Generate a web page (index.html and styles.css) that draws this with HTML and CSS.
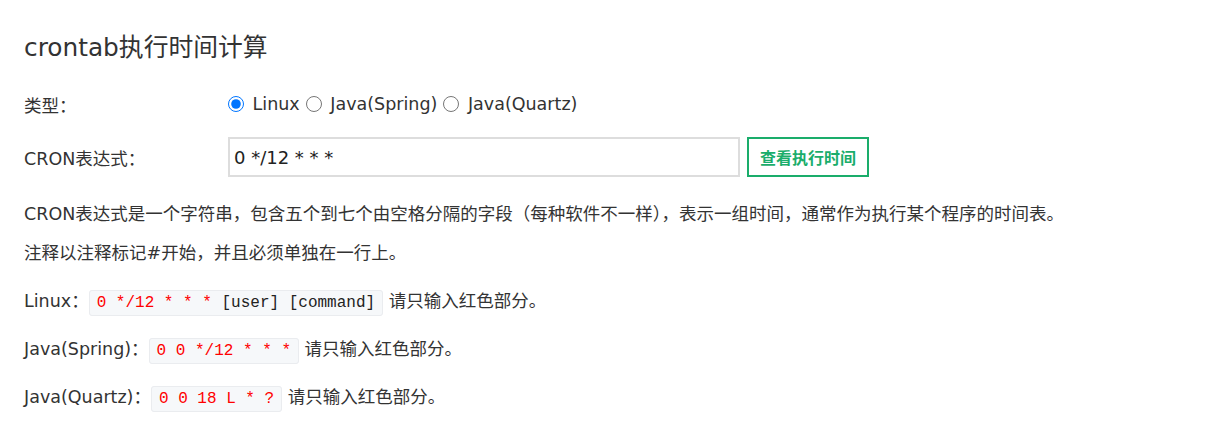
FILE: index.html
```html
<!DOCTYPE html>
<html lang="zh-CN">
<head>
    <meta charset="UTF-8">
    <meta name="viewport" content="width=device-width, initial-scale=1.0">
    <title>crontab执行时间计算</title>
    <link rel="stylesheet" href="styles.css">
</head>
<body>
    <div class="page">
        <h1>crontab执行时间计算</h1>

        <div class="form-row">
            <label class="form-label">类型：</label>
            <div class="radios">
                <label class="radio"><input type="radio" name="type" checked> Linux</label>
                <label class="radio"><input type="radio" name="type"> Java(Spring)</label>
                <label class="radio"><input type="radio" name="type"> Java(Quartz)</label>
            </div>
        </div>

        <div class="form-row">
            <label class="form-label">CRON表达式：</label>
            <input class="cron-input" type="text" value="0 */12 * * *">
            <button class="btn-run">查看执行时间</button>
        </div>

        <div class="notes">
            <p class="desc">CRON表达式是一个字符串，包含五个到七个由空格分隔的字段（每种软件不一样），表示一组时间，通常作为执行某个程序的时间表。</p>
            <p class="desc">注释以注释标记#开始，并且必须单独在一行上。</p>

            <p class="example first">Linux：<code><span class="red">0 */12 * * *</span> [user] [command]</code> 请只输入红色部分。</p>
            <p class="example">Java(Spring)：<code><span class="red">0 0 */12 * * *</span></code> 请只输入红色部分。</p>
            <p class="example">Java(Quartz)：<code><span class="red">0 0 18 L * ?</span></code> 请只输入红色部分。</p>
        </div>
    </div>
</body>
</html>
```

FILE: styles.css
```css
body {
    margin: 0;
    font-family: "DejaVu Sans", "Noto Sans CJK SC", sans-serif;
    font-size: 17.5px;
    color: #333;
    background: #fff;
}
.page {
    padding: 28px 24px 0;
}
h1 {
    font-size: 24.8px;
    font-weight: normal;
    margin: 0 0 16px;
    line-height: 40px;
}
.form-row {
    display: flex;
    align-items: center;
    margin-bottom: 13px;
}
.form-label {
    width: 204px;
    flex-shrink: 0;
}
.radios {
    display: flex;
    gap: 6px;
    height: 40px;
    align-items: center;
}
.radio input {
    margin: 0 3px 0 0;
    width: 16px;
    height: 16px;
    vertical-align: -2px;
}
.cron-input {
    width: 512px;
    height: 40px;
    box-sizing: border-box;
    border: 2px solid #ddd;
    padding: 0 4px;
    font-family: "DejaVu Sans", sans-serif;
    font-size: 18px;
    color: #222;
    outline: none;
}
.btn-run {
    margin-left: 7px;
    height: 40px;
    padding: 0 11px;
    border: 2px solid #1aad6b;
    background: #fff;
    color: #1aad6b;
    font-family: "Noto Sans CJK SC", sans-serif;
    font-size: 16px;
    font-weight: bold;
}
.notes {
    padding-top: 5px;
}
.desc {
    margin: 0;
    line-height: 39px;
}
.example {
    margin: 0;
    line-height: 46px;
}
.example.first {
    margin-top: 5px;
}
code {
    font-family: "Liberation Mono", monospace;
    font-size: 16px;
    background: #f6f8fa;
    border: 1px solid #eaecef;
    border-radius: 3px;
    padding: 3px 7px;
    color: #222;
}
.red {
    color: #f00;
}
```
